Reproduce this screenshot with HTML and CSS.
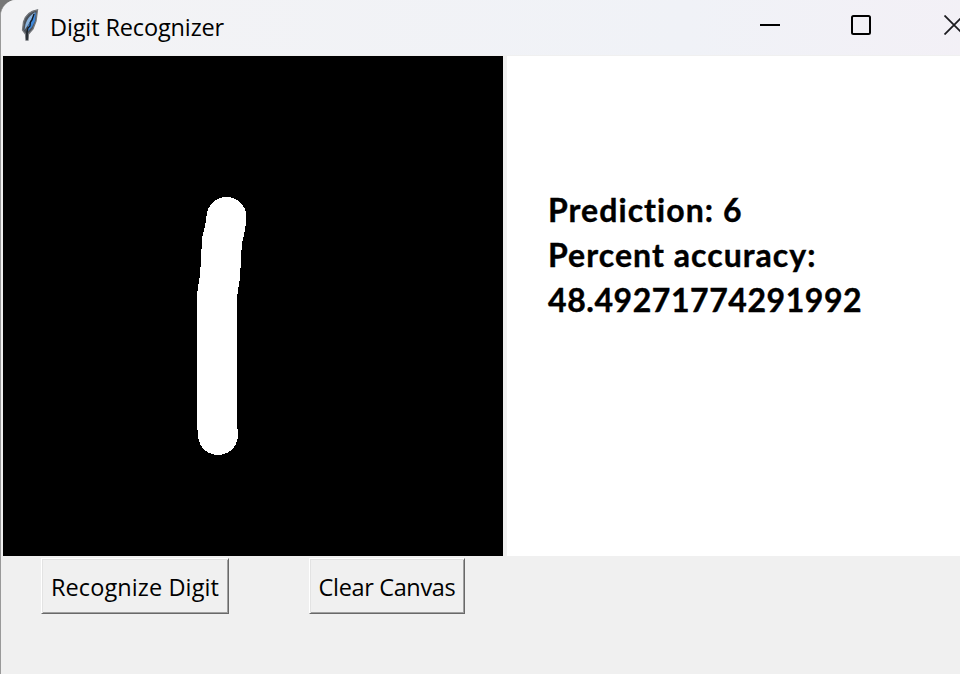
FILE: index.html
```html
<!DOCTYPE html>
<html lang="en">
<head>
<meta charset="utf-8">
<title>Digit Recognizer</title>
<link rel="stylesheet" href="styles.css">
</head>
<body>
<div class="window">
  <header class="titlebar">
    <svg class="feather" width="20" height="34" viewBox="0 0 20 34">
      <path d="M17.500 .8C10 2 5 7 3.500 13L2.500 21L5.500 25L6 31H8L8.500 25L13 20L16 12Z" fill="#4a5058" stroke="#73767a" stroke-width="1.3"/>
      <path d="M15.500 3C10 6 6 11 5 18L4.500 21L8 16L12 9Z" fill="#8bb4df"/>
      <path d="M16 3L15 12L12 18L8 22L8 17L12 9Z" fill="#3d86d8"/>
      <path d="M14 5L12 11L10.500 13L10 17L8 19L7 23V31" fill="none" stroke="#111820" stroke-width="1.3"/>
    </svg>
    <h1 class="title">Digit Recognizer</h1>
    <div class="controls">
      <svg width="20" height="20" viewBox="0 0 20 20"><path d="M0 10H20" stroke="#000" stroke-width="2"/></svg>
      <svg width="20" height="20" viewBox="0 0 20 20"><rect x="1" y="1" width="18" height="18" rx="1.5" fill="none" stroke="#000" stroke-width="2"/></svg>
      <svg class="close" width="20" height="20" viewBox="0 0 20 20"><path d="M.5 .5L19.5 19.5M19.5 .5L.5 19.5" stroke="#1b1b1f" stroke-width="1.8"/></svg>
    </div>
  </header>
  <main class="content">
    <svg class="canvas" width="500" height="500" viewBox="3 56 500 500" shape-rendering="crispEdges">
      <path d="M226.500 217L225 228L222 241L220 276L217 296V424L218 435" fill="none" stroke="#fff" stroke-width="40" stroke-linecap="round" stroke-linejoin="round"/>
    </svg>
    <section class="result">
      <p>Prediction: 6</p>
      <p class="label">Percent accuracy:</p>
      <p class="number">48.49271774291992</p>
    </section>
  </main>
  <footer class="actions">
    <button class="button recognize"><span>Recognize Digit</span></button>
    <button class="button clear"><span>Clear Canvas</span></button>
  </footer>
</div>
</body>
</html>
```
FILE: styles.css
```css
* { box-sizing: border-box; }
body { margin: 0; background: #777; overflow: hidden; }
.window {
  width: 980px;
  height: 674px;
  border-left: 1px solid #999;
  border-top-left-radius: 16px;
  background: #f0f0f0;
  overflow: hidden;
}
.titlebar {
  height: 56px;
  display: flex;
  align-items: flex-start;
  background: linear-gradient(90deg, #f3f3f5, #f0f2f7 70%, #f3f0f6);
  border-bottom: 1px solid #f0f0f0;
}
.feather { margin: 9px 0 0 19px; flex: none; }
.title {
  width: 180px;
  margin: 10px 0 0 10px;
  font: 400 23.5px/34px "Open Sans", sans-serif;
  letter-spacing: -.13px;
  white-space: nowrap;
  color: #000;
}
.controls { display: flex; gap: 71px; margin: 15px 0 0 530px; }
.controls svg { flex: none; }
.controls .close { margin-left: 2px; }
.content { display: flex; height: 500px; }
.canvas { flex: none; background: #000; margin-left: 2px; }
.result {
  flex: 1;
  margin-left: 4px;
  padding: 131px 0 0 41px;
  background: #fff;
  color: #000;
  font: 700 32px/45px Lato, sans-serif;
  font-variant-ligatures: none;
  letter-spacing: 1.05px;
  -webkit-text-stroke: .4px #000;
}
.result p { margin: 0; }
.result .number { letter-spacing: .57px; }
.actions { display: flex; gap: 80px; padding: 2px 0 0 40px; }
.button {
  height: 56px;
  padding: 2px 0 0;
  background: #f0f0f0;
  border: 1px solid;
  border-color: #fff #696969 #696969 #fff;
  box-shadow: inset 1px 1px #e3e3e3, inset -1px -1px #a0a0a0;
  color: #000;
  font: 400 23.5px/32px "Open Sans", sans-serif;
  white-space: nowrap;
}
.recognize { width: 188px; letter-spacing: .1px; }
.clear { width: 156px; letter-spacing: -.35px; }
```
